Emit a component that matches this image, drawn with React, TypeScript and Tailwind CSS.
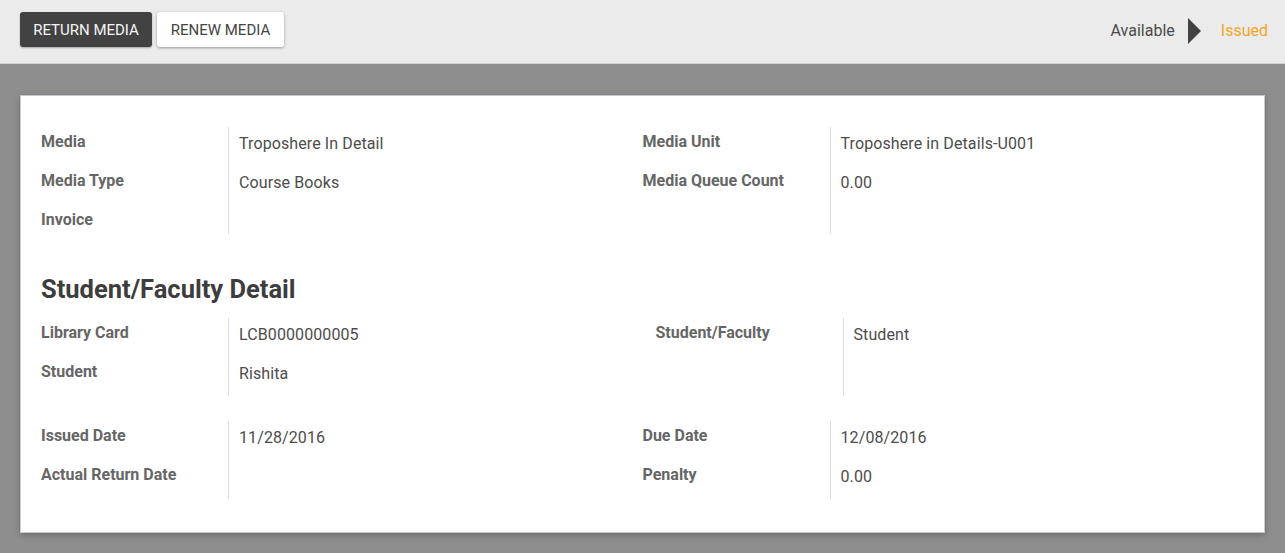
import React from "react";

type Row = { label: string; value?: string; h?: number };

function Group({ rows, height, indent = 0 }: { rows: Row[]; height?: number; indent?: number }) {
  return (
    <div className="flex" style={{ paddingLeft: indent }}>
      <div className="w-[187px] shrink-0">
        {rows.map((r) => (
          <div key={r.label} className="pt-[5px] text-[16px] leading-[20px] font-bold text-[#666666]" style={{ height: r.h ?? 39 }}>
            {r.label}
          </div>
        ))}
      </div>
      <div className="border-l border-[#dcdcdc] pl-[10px] flex-1" style={height ? { height } : undefined}>
        {rows.map((r) => (
          <div key={r.label} className="pt-[6px] text-[16px] leading-[22px] tracking-[0.1px] text-[#4c4c4c]" style={{ height: r.h ?? 39 }}>
            {r.value ?? ""}
          </div>
        ))}
      </div>
    </div>
  );
}

export default function App() {
  return (
    <div className="w-[1285px] h-[553px] bg-[#8e8e8e] overflow-hidden" style={{ fontFamily: "Roboto, 'Noto Sans', sans-serif" }}>
      <div className="h-[64px] bg-[#ebebeb] border-b border-[#d2d2d2] flex items-start justify-between pl-[20px] pr-[17px]">
        <div className="flex gap-[5px] pt-[12px]">
          <button className="h-[35px] w-[132px] rounded-[3px] bg-[#424242] text-[#f4f4f4] text-[15px] leading-none pt-[2px] uppercase shadow-[0_1px_2px_rgba(0,0,0,0.3)]">
            Return Media
          </button>
          <button className="h-[35px] w-[127px] rounded-[3px] bg-white text-[#444] text-[15px] leading-none pt-[2px] uppercase shadow-[0_1px_3px_rgba(0,0,0,0.35)]">
            Renew Media
          </button>
        </div>
        <div className="flex items-center h-[61px] text-[16px]">
          <span className="text-[#4a4a4a]">Available</span>
          <svg width="13" height="26" viewBox="0 0 13 26" className="ml-[13px] mr-[20px]">
            <polygon points="0,0 13,13 0,26" fill="#424242" />
          </svg>
          <span className="text-[#f5a51f]">Issued</span>
        </div>
      </div>
      <div className="mx-[20px] mt-[31px] bg-white border border-[#c8c8d0] shadow-[0_2px_6px_rgba(0,0,0,0.25)] pt-[31px] pb-[33px] px-[20px]">
        <div className="grid grid-cols-2">
          <Group
            rows={[
              { label: "Media", value: "Troposhere In Detail" },
              { label: "Media Type", value: "Course Books" },
              { label: "Invoice", h: 29 },
            ]}
          />
          <Group
            rows={[
              { label: "Media Unit", value: "Troposhere in Details-U001" },
              { label: "Media Queue Count", value: "0.00" },
            ]}
          />
        </div>
        <h2 className="mt-[39px] mb-[13px] text-[25.5px] leading-[32px] font-bold text-[#3d3d3d]">Student/Faculty Detail</h2>
        <div className="grid grid-cols-2">
          <Group
            rows={[
              { label: "Library Card", value: "LCB0000000005" },
              { label: "Student", value: "Rishita" },
            ]}
          />
          <Group indent={13} height={78} rows={[{ label: "Student/Faculty", value: "Student" }]} />
        </div>
        <div className="grid grid-cols-2 mt-[25px]">
          <Group
            rows={[
              { label: "Issued Date", value: "11/28/2016" },
              { label: "Actual Return Date" },
            ]}
          />
          <Group
            rows={[
              { label: "Due Date", value: "12/08/2016" },
              { label: "Penalty", value: "0.00" },
            ]}
          />
        </div>
      </div>
    </div>
  );
}
